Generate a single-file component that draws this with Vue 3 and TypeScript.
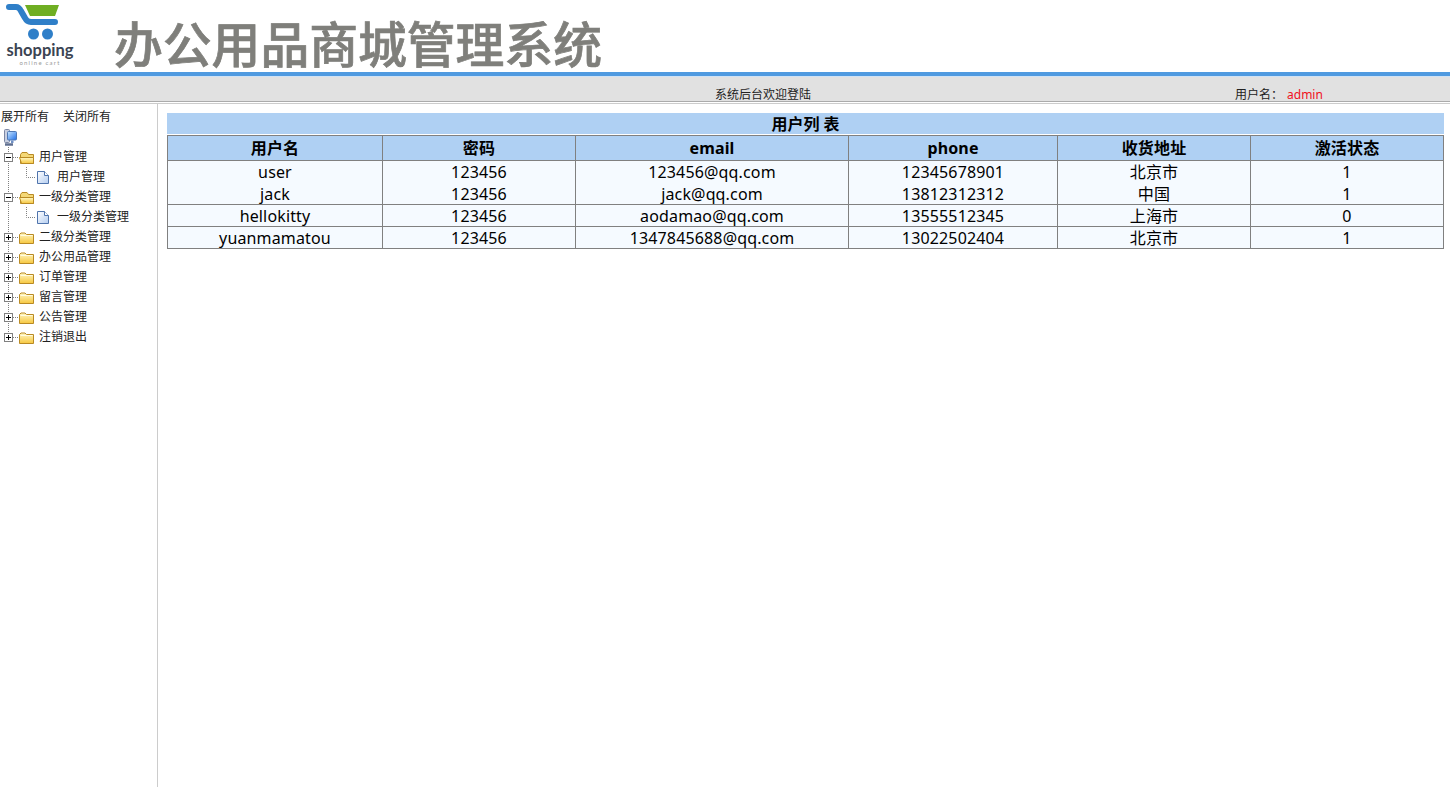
<script setup lang="ts">
interface TreeRow { label: string; level: number; kind: 'open' | 'closed' | 'page'; last?: boolean }
const tree: TreeRow[] = [
  { label: '用户管理', level: 1, kind: 'open' },
  { label: '用户管理', level: 2, kind: 'page' },
  { label: '一级分类管理', level: 1, kind: 'open' },
  { label: '一级分类管理', level: 2, kind: 'page' },
  { label: '二级分类管理', level: 1, kind: 'closed' },
  { label: '办公用品管理', level: 1, kind: 'closed' },
  { label: '订单管理', level: 1, kind: 'closed' },
  { label: '留言管理', level: 1, kind: 'closed' },
  { label: '公告管理', level: 1, kind: 'closed' },
  { label: '注销退出', level: 1, kind: 'closed', last: true },
]
const heads = ['用户名', '密码', 'email', 'phone', '收货地址', '激活状态']
const rows = [
  { cells: ['user', '123456', '123456@qq.com', '12345678901', '北京市', '1'], open: true },
  { cells: ['jack', '123456', 'jack@qq.com', '13812312312', '中国', '1'], open: false },
  { cells: ['hellokitty', '123456', 'aodamao@qq.com', '13555512345', '上海市', '0'], open: false },
  { cells: ['yuanmamatou', '123456', '1347845688@qq.com', '13022502404', '北京市', '1'], open: false },
]
</script>

<template>
  <div class="page">
    <svg class="defs" width="0" height="0" aria-hidden="true">
      <defs>
        <linearGradient id="fold" x1="0" y1="0" x2="0" y2="1">
          <stop offset="0" stop-color="#fff7c4" />
          <stop offset="1" stop-color="#f6c73f" />
        </linearGradient>
        <linearGradient id="paper" x1="0" y1="0" x2="1" y2="1">
          <stop offset="0" stop-color="#ffffff" />
          <stop offset="1" stop-color="#b4cdf0" />
        </linearGradient>
        <linearGradient id="screen" x1="0" y1="0" x2="1" y2="1">
          <stop offset="0" stop-color="#c8e6ff" />
          <stop offset="1" stop-color="#1f6fe8" />
        </linearGradient>
      </defs>
    </svg>

    <header class="top">
      <svg class="logo" width="80" height="70" viewBox="0 0 80 70">
        <polygon points="25,5 59,5 55,16 30,16" fill="#6fae22" />
        <path d="M9,7 H16 Q19,7 21,11 L25,18 Q27,22 31,22 H55" fill="none" stroke="#2f7fc8" stroke-width="6" stroke-linecap="round" />
        <circle cx="33.5" cy="34" r="5.5" fill="#2f7fc8" />
        <circle cx="47.5" cy="34" r="5.5" fill="#2f7fc8" />
        <text x="40" y="56" text-anchor="middle" class="logo-main">shopping</text>
        <text x="40" y="65" text-anchor="middle" class="logo-sub">online cart</text>
      </svg>
      <h1 class="title">办公用品商城管理系统</h1>
    </header>
    <div class="blue"></div>
    <div class="bar">
      <span class="welcome">系统后台欢迎登陆</span>
      <span class="user">用户名：</span>
      <span class="admin">admin</span>
    </div>

    <div class="body">
      <aside class="side">
        <div class="links"><a>展开所有</a><a>关闭所有</a></div>
        <div class="root">
          <svg width="16" height="18" viewBox="0 0 16 18">
            <rect x="2.5" y="0.5" width="5" height="13" rx="1" fill="#c8cfe0" stroke="#7b86a3" />
            <rect x="5.5" y="2.5" width="9" height="8.5" rx="1" fill="url(#screen)" stroke="#4f78b4" />
            <path d="M9,11.5 H11.5 V14 H9 Z" fill="#6f8fc4" />
            <path d="M3,15.5 H11" stroke="#5f6f90" stroke-width="2.5" />
          </svg>
        </div>
        <div v-for="(r, i) in tree" :key="i" class="row">
          <svg v-if="r.level === 2" class="cell" width="18" height="20" viewBox="0 0 18 20">
            <path d="M8.5,0 V20" class="dots" />
          </svg>
          <svg class="cell" width="18" height="20" viewBox="0 0 18 20">
            <template v-if="r.level === 1">
              <path :d="r.last ? 'M8.5,0 V6' : 'M8.5,0 V20'" class="dots" />
              <path d="M13,10.5 H18" class="dots" />
              <rect x="4.5" y="6.5" width="8" height="8" fill="#fff" stroke="#808080" />
              <path d="M6,10.5 H11" stroke="#000" fill="none" />
              <path v-if="r.kind === 'closed'" d="M8.5,8 V13" stroke="#000" fill="none" />
            </template>
            <path v-else d="M8.5,0 V10.5 H18" class="dots" />
          </svg>
          <svg v-if="r.kind === 'page'" class="cell" width="18" height="20" viewBox="0 0 18 20">
            <path d="M1.5,4.5 H8.5 L12.5,8.5 V16.5 H1.5 Z" fill="url(#paper)" stroke="#4f74ad" />
            <path d="M8.5,4.5 V8.5 H12.5" fill="#fff" stroke="#4f74ad" />
          </svg>
          <svg v-else-if="r.kind === 'open'" class="cell" width="18" height="20" viewBox="0 0 18 20">
            <path d="M2.5,16.5 V7.5 L4,5.5 H9 L10.5,7.5 H15.5 V16.5 Z" fill="#f4d877" stroke="#b98a24" />
            <path d="M1.5,10.5 H15.5 V16.5 H3.5 Z" fill="url(#fold)" stroke="#b98a24" />
          </svg>
          <svg v-else class="cell" width="18" height="20" viewBox="0 0 18 20">
            <path d="M1.5,16.5 V7.5 L3,6 H7 L8.5,7.5 H15.5 V16.5 Z" fill="url(#fold)" stroke="#b98a24" stroke-linejoin="round" />
            <path d="M2.5,8.5 H14.5" stroke="#fffbe0" fill="none" />
          </svg>
          <span class="label">{{ r.label }}</span>
        </div>
      </aside>

      <main class="main">
        <div class="caption">用户列 表</div>
        <table class="grid">
          <colgroup>
            <col class="c1" /><col class="c2" /><col class="c3" />
            <col class="c4" /><col class="c2" /><col class="c2" />
          </colgroup>
          <thead>
            <tr><th v-for="h in heads" :key="h">{{ h }}</th></tr>
          </thead>
          <tbody>
            <tr v-for="(row, i) in rows" :key="i" :class="{ open: row.open }">
              <td v-for="(c, j) in row.cells" :key="j">{{ c }}</td>
            </tr>
          </tbody>
        </table>
      </main>
    </div>
  </div>
</template>

<style>
html, body { margin: 0; background: #fff; }
</style>

<style scoped>
.page {
  height: 787px;
  overflow: hidden;
  display: flex;
  flex-direction: column;
  font-family: "Noto Sans", "Noto Sans CJK SC", sans-serif;
  color: #000;
}
.defs { position: absolute; }
.top { height: 72px; display: flex; align-items: flex-start; flex: none; }
.logo { flex: none; }
.logo-main { font: 700 16.5px "Lato", sans-serif; fill: #3b4452; }
.logo-sub { font: 400 6px "Lato", sans-serif; fill: #9a9a9a; letter-spacing: 1.2px; }
.title {
  margin: 12px 0 0 34px;
  font: 500 48.8px/60px "Noto Sans CJK SC", sans-serif;
  color: #7f7f7b;
  -webkit-text-stroke: 0.7px #7f7f7b;
  white-space: nowrap;
}
.blue { height: 4px; flex: none; background: #4f9ae0; border-bottom: 1px solid #cfe2f5; }
.bar {
  height: 24px;
  flex: none;
  display: flex;
  align-items: flex-end;
  background: #e1e1e1;
  border-bottom: 1px solid #ababab;
  font-size: 12px;
  line-height: 12px;
  color: #222;
}
.welcome { margin-left: 715px; width: 520px; }
.admin { color: #f01020; margin-left: 4px; }
.body {
  flex: 1;
  display: flex;
  margin-top: 1px;
  border-top: 1px solid #ccc;
  min-height: 0;
}
.side {
  width: 157px;
  flex: none;
  border-right: 1px solid #ccc;
  font-size: 12px;
  color: #222;
}
.links { display: flex; gap: 14px; padding: 5px 0 0 1px; height: 20px; line-height: 16px; box-sizing: border-box; }
.root { height: 23px; padding: 5px 0 0 2px; box-sizing: border-box; }
.root svg { display: block; }
.row { height: 20px; display: flex; align-items: center; }
.cell { flex: none; display: block; }
.dots { stroke: #808080; stroke-dasharray: 1 1; fill: none; }
.label { margin-left: 3px; line-height: 20px; white-space: nowrap; }
.main { flex: 1; padding: 9px 6px 0 9px; min-width: 0; }
.caption {
  height: 21px;
  width: 1277px;
  background: #afd0f3;
  font-size: 16px;
  font-weight: 700;
  line-height: 23px;
  text-align: center;
}
.grid {
  margin-top: 1px;
  width: 1277px;
  table-layout: fixed;
  border-collapse: collapse;
  font-size: 16px;
  letter-spacing: 0.15px;
}
.c1 { width: 215px; }
.c2 { width: 193px; }
.c3 { width: 273px; }
.c4 { width: 209px; }
th, td { text-align: center; border: 1px solid #808080; }
th { padding: 0; height: 24px; line-height: 24px; background: #afd0f3; font-weight: 700; }
td { padding: 2px 0 0; height: 19px; line-height: 19px; background: #f5faff; }
tr.open td { border-bottom: none; padding-top: 1px; height: 21px; line-height: 21px; }
tr.open + tr td { border-top: none; }
</style>
